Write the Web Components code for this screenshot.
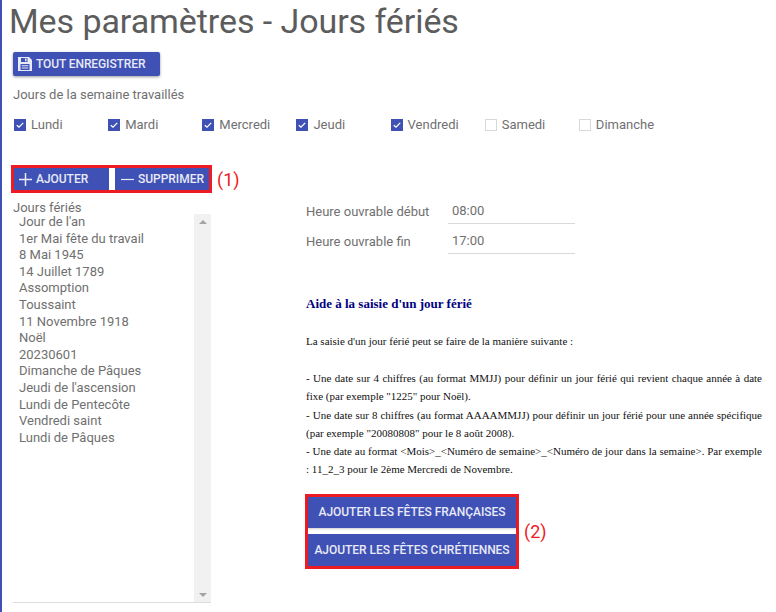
<!DOCTYPE html>
<html lang="fr">
<head>
<meta charset="utf-8">
<title>Mes paramètres - Jours fériés</title>
<style>
  html, body { margin: 0; height: 100%; background: #fff; }
  body { font-family: Roboto, "Liberation Sans", sans-serif; overflow: hidden; }
</style>
</head>
<body>
<settings-page></settings-page>

<script>
class UiButton extends HTMLElement {
  constructor() {
    super();
    this.attachShadow({mode: 'open'}).innerHTML = `
      <style>
        :host { display: flex; align-items: center; justify-content: center; box-sizing: border-box;
          background: #3f51b5; color: #e8eaf6; font: 500 12px Roboto, sans-serif; letter-spacing: -.03px; white-space: nowrap; height: var(--h, 22px); }
        ::slotted(svg) { flex: none; }
      </style>
      <slot></slot>`;
  }
}
customElements.define('ui-button', UiButton);

class DayCheck extends HTMLElement {
  constructor() {
    super();
    const on = this.hasAttribute('checked');
    this.attachShadow({mode: 'open'}).innerHTML = `
      <style>
        :host { display: flex; align-items: center; gap: 5px; width: 94.15px; font: 13px Roboto, sans-serif; color: #707070; }
        .box { width: 12px; height: 12px; box-sizing: border-box; flex: none; display: flex; }
        .on { background: #3f51b5; }
        .off { border: 1px solid #d8d8d8; }
      </style>
      <span class="box ${on ? 'on' : 'off'}">${on ? '<svg width="12" height="12" viewBox="0 0 12 12"><path d="M2.800 6.200 5 8.200 9.200 3.900" fill="none" stroke="#fff" stroke-width="1.300"/></svg>' : ''}</span>
      <slot></slot>`;
  }
}
customElements.define('day-check', DayCheck);

class HolidayList extends HTMLElement {
  constructor() {
    super();
    this.attachShadow({mode: 'open'}).innerHTML = `
      <style>
        :host { display: block; width: 198px; font: 13px Roboto, sans-serif; color: #707070; }
        .title { line-height: 15px; }
        .box { display: flex; height: 389px; border-bottom: 1px solid #ddd; box-sizing: border-box; margin-top: -1px; }
        .items { flex: 1; padding: 0 0 0 6px; }
        ::slotted(div) { line-height: 16.6px; }
        .bar { width: 17px; background: #f1f1f1; display: flex; flex-direction: column; justify-content: space-between; align-items: center; padding: 6px 0 5px; box-sizing: border-box; }
        .up { border: 4px solid transparent; border-top: 0; border-bottom: 4px solid #a3a3a3; }
        .down { border: 4px solid transparent; border-bottom: 0; border-top: 4px solid #a3a3a3; }
      </style>
      <div class="title">Jours fériés</div>
      <div class="box">
        <div class="items"><slot></slot></div>
        <div class="bar"><i class="up"></i><i class="down"></i></div>
      </div>`;
  }
}
customElements.define('holiday-list', HolidayList);

class HourField extends HTMLElement {
  constructor() {
    super();
    this.attachShadow({mode: 'open'}).innerHTML = `
      <style>
        :host { display: flex; align-items: flex-end; height: 24px; font: 13px Roboto, sans-serif; color: #707070; }
        .label { width: 142px; padding-bottom: 4px; line-height: 16px; }
        .value { width: 127px; box-sizing: border-box; padding: 0 0 4px 4px; line-height: 16px; border-bottom: 1px solid #d9d9d9; }
      </style>
      <span class="label"><slot></slot></span>
      <span class="value">${this.getAttribute('value')}</span>`;
  }
}
customElements.define('hour-field', HourField);

class HelpText extends HTMLElement {
  constructor() {
    super();
    this.attachShadow({mode: 'open'}).innerHTML = `
      <style>
        :host { display: block; width: 456px; font: 11px/18.2px "Liberation Serif", serif; color: #111; text-align: justify; }
        h3 { margin: 0 0 19px; font: bold 13px/18px "Liberation Serif", serif; color: #000080; }
        p { margin: 0 0 19px; }
      </style>
      <h3>Aide à la saisie d'un jour férié</h3>
      <p>La saisie d'un jour férié peut se faire de la manière suivante :</p>
      <div>- Une date sur 4 chiffres (au format MMJJ) pour définir un jour férié qui revient chaque année à date fixe (par exemple "1225" pour Noël).</div>
      <div>- Une date sur 8 chiffres (au format AAAAMMJJ) pour définir un jour férié pour une année spécifique (par exemple "20080808" pour le 8 août 2008).</div>
      <div>- Une date au format &lt;Mois&gt;_&lt;Numéro de semaine&gt;_&lt;Numéro de jour dans la semaine&gt;. Par exemple : 11_2_3 pour le 2ème Mercredi de Novembre.</div>`;
  }
}
customElements.define('help-text', HelpText);

class SettingsPage extends HTMLElement {
  constructor() {
    super();
    this.attachShadow({mode: 'open'}).innerHTML = `
      <style>
        :host { display: block; box-sizing: border-box; height: 612px; border-left: 2px solid #3f51b5; padding-left: 7px; font: 13px Roboto, sans-serif; color: #707070; }
        h1 { margin: 0; font: 400 34px/42px Roboto, sans-serif; letter-spacing: -.07px; color: #5c5c5c; }
        .content { padding-left: 4px; }
        .save { width: 147px; margin-top: 10px; --h: 24px; border-radius: 2px; box-shadow: 0 1px 3px rgba(0,0,0,.4); gap: 4px; letter-spacing: -.1px; justify-content: flex-start; padding-left: 5px; }
        .worked { margin-top: 11px; line-height: 15px; }
        .days { display: flex; margin: 15px 0 0 1px; line-height: 16px; }
        .outline { display: flex; box-sizing: border-box; border: 3px solid #ed1c24; }
        .toolbar-row, .preset-row { display: flex; align-items: center; gap: 5px; color: #ed1c24; font-size: 18px; }
        .toolbar-row { margin: 33px 0 0 -2px; }
        .toolbar { width: 201px; height: 28px; gap: 6px; }
        .add { width: 95px; gap: 3px; justify-content: flex-start; padding-left: 4px; }
        .del { width: 94px; gap: 4px; justify-content: flex-start; padding-left: 6px; }
        .main { display: flex; margin-top: 7px; }
        .right { margin-left: 95px; }
        hour-field { margin-bottom: 6px; }
        hour-field:last-of-type { margin-bottom: 0; }
        help-text { margin-top: 41px; }
        .preset-row { margin: 16px 0 0 -1px; }
        .presets { flex-direction: column; width: 214px; height: 75px; gap: 6px; }
        .presets ui-button:first-child { --h: 31px; padding-bottom: 1px; box-shadow: 0 1px 2px rgba(0,0,0,.2); }
        .presets ui-button:last-child { --h: 32px; }
      </style>
      <h1>Mes paramètres - Jours fériés</h1>
      <div class="content">
        <ui-button class="save">
          <svg width="14" height="14" viewBox="0 0 14 14"><path fill="#e8eaf6" fill-rule="evenodd" d="M0 0h11l3 3v11H0ZM3 .9v4h6.500v-4ZM2.500 7v6h9V7ZM3.700 8.300h6.600v1H3.700ZM3.700 10.400h6.600v1H3.700ZM7 1.500h1.500v2.800H7Z"/></svg>
          TOUT ENREGISTRER
        </ui-button>
        <div class="worked">Jours de la semaine travaillés</div>
        <div class="days">
          <day-check checked>Lundi</day-check>
          <day-check checked>Mardi</day-check>
          <day-check checked>Mercredi</day-check>
          <day-check checked>Jeudi</day-check>
          <day-check checked>Vendredi</day-check>
          <day-check>Samedi</day-check>
          <day-check>Dimanche</day-check>
        </div>
        <div class="toolbar-row">
          <div class="outline toolbar">
            <ui-button class="add">
              <svg width="15" height="15" viewBox="0 0 15 15"><path d="M7.500 1v13M1 7.500h13" stroke="#e8eaf6" stroke-width="1.500"/></svg>
              AJOUTER
            </ui-button>
            <ui-button class="del">
              <svg width="13" height="15" viewBox="0 0 13 15"><path d="M0 7.500h13" stroke="#e8eaf6" stroke-width="1.200"/></svg>
              SUPPRIMER
            </ui-button>
          </div>
          <span>(1)</span>
        </div>
        <div class="main">
          <holiday-list>
            <div>Jour de l'an</div>
            <div>1er Mai fête du travail</div>
            <div>8 Mai 1945</div>
            <div>14 Juillet 1789</div>
            <div>Assomption</div>
            <div>Toussaint</div>
            <div>11 Novembre 1918</div>
            <div>Noël</div>
            <div>20230601</div>
            <div>Dimanche de Pâques</div>
            <div>Jeudi de l'ascension</div>
            <div>Lundi de Pentecôte</div>
            <div>Vendredi saint</div>
            <div>Lundi de Pâques</div>
          </holiday-list>
          <div class="right">
            <hour-field value="08:00">Heure ouvrable début</hour-field>
            <hour-field value="17:00">Heure ouvrable fin</hour-field>
            <help-text></help-text>
            <div class="preset-row">
              <div class="outline presets">
                <ui-button>AJOUTER LES FÊTES FRANÇAISES</ui-button>
                <ui-button>AJOUTER LES FÊTES CHRÉTIENNES</ui-button>
              </div>
              <span>(2)</span>
            </div>
          </div>
        </div>
      </div>`;
  }
}
customElements.define('settings-page', SettingsPage);
</script>
</body>
</html>
